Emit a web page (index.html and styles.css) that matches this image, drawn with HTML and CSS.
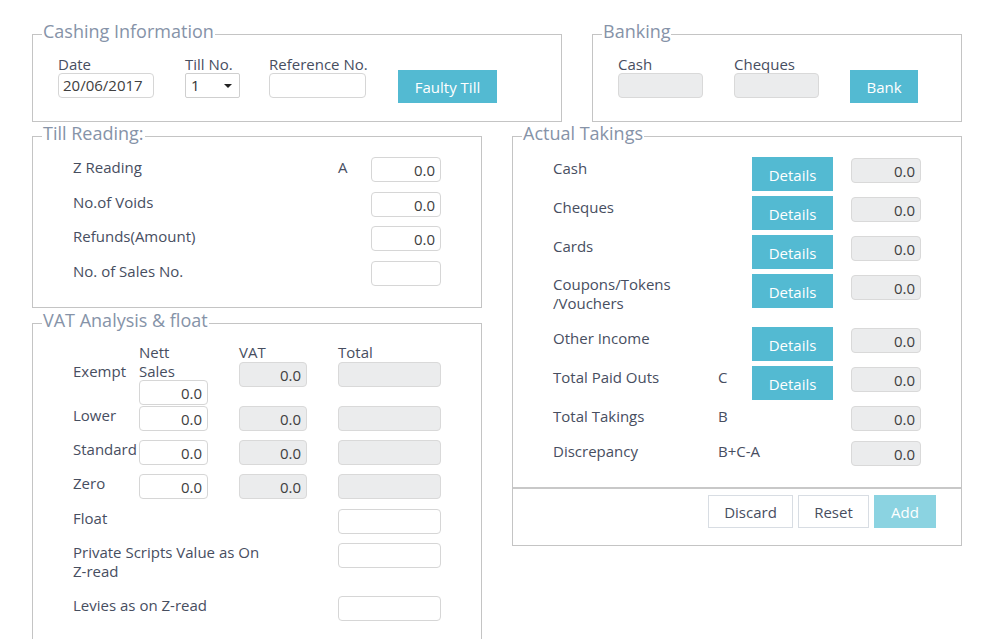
FILE: index.html
```html
<!DOCTYPE html>
<html>
<head>
<meta charset="utf-8">
<link rel="stylesheet" href="styles.css">
</head>
<body>
<div class="page">
  <div class="top-row">
    <fieldset class="box cashing">
      <legend>Cashing Information</legend>
      <div class="inline-fields">
        <div class="field f-date">
          <label class="flabel">Date</label>
          <div class="input">20/06/2017</div>
        </div>
        <div class="field f-till">
          <label class="flabel">Till No.</label>
          <div class="input select"><span>1</span><span class="caret"></span></div>
        </div>
        <div class="field f-ref">
          <label class="flabel">Reference No.</label>
          <div class="input"></div>
        </div>
        <button class="btn btn-primary btn-faulty">Faulty Till</button>
      </div>
    </fieldset>
    <fieldset class="box banking">
      <legend>Banking</legend>
      <div class="inline-fields">
        <div class="field f-cash">
          <label class="flabel">Cash</label>
          <div class="input disabled"></div>
        </div>
        <div class="field f-cheq">
          <label class="flabel">Cheques</label>
          <div class="input disabled"></div>
        </div>
        <button class="btn btn-primary btn-bank">Bank</button>
      </div>
    </fieldset>
  </div>

  <div class="bottom-row">
    <div class="col">
      <fieldset class="box till">
        <legend>Till Reading:</legend>
        <div class="till-grid">
          <div class="tr">
            <span class="lbl">Z Reading</span><span class="mark">A</span><div class="input num">0.0</div>
          </div>
          <div class="tr">
            <span class="lbl">No.of Voids</span><span class="mark"></span><div class="input num">0.0</div>
          </div>
          <div class="tr tr-tight">
            <span class="lbl">Refunds(Amount)</span><span class="mark"></span><div class="input num">0.0</div>
          </div>
          <div class="tr">
            <span class="lbl">No. of Sales No.</span><span class="mark"></span><div class="input num"></div>
          </div>
        </div>
      </fieldset>

      <fieldset class="box vat">
        <legend>VAT Analysis &amp; float</legend>
        <div class="vat-body">
          <div class="vr vr-exempt">
            <span class="lbl lbl-exempt">Exempt</span>
            <div class="vc"><span class="head head2">Nett<br>Sales</span><div class="input num w-nett">0.0</div></div>
            <div class="vc"><span class="head">VAT</span><div class="input num disabled w-vat">0.0</div></div>
            <div class="vc"><span class="head">Total</span><div class="input disabled w-total"></div></div>
          </div>
          <div class="vr vr-lower">
            <span class="lbl">Lower</span>
            <div class="vc"><div class="input num w-nett">0.0</div></div>
            <div class="vc"><div class="input num disabled w-vat">0.0</div></div>
            <div class="vc"><div class="input disabled w-total"></div></div>
          </div>
          <div class="vr">
            <span class="lbl">Standard</span>
            <div class="vc"><div class="input num w-nett">0.0</div></div>
            <div class="vc"><div class="input num disabled w-vat">0.0</div></div>
            <div class="vc"><div class="input disabled w-total"></div></div>
          </div>
          <div class="vr">
            <span class="lbl">Zero</span>
            <div class="vc"><div class="input num w-nett">0.0</div></div>
            <div class="vc"><div class="input num disabled w-vat">0.0</div></div>
            <div class="vc"><div class="input disabled w-total"></div></div>
          </div>
          <div class="vr vr-float">
            <span class="lbl span3">Float</span>
            <div class="vc"><div class="input w-total"></div></div>
          </div>
          <div class="vr">
            <span class="lbl span3 lbl-two">Private Scripts Value as On<br>Z-read</span>
            <div class="vc"><div class="input w-total"></div></div>
          </div>
          <div class="vr vr-levies">
            <span class="lbl span3">Levies as on Z-read</span>
            <div class="vc"><div class="input w-total"></div></div>
          </div>
        </div>
      </fieldset>
    </div>

    <div class="col">
      <fieldset class="box takings">
        <legend>Actual Takings</legend>
        <div class="tk-body">
          <div class="tk">
            <span class="tlbl">Cash</span><span class="tmark"></span>
            <button class="btn btn-primary btn-details">Details</button><span></span>
            <div class="input num disabled">0.0</div>
          </div>
          <div class="tk">
            <span class="tlbl">Cheques</span><span class="tmark"></span>
            <button class="btn btn-primary btn-details">Details</button><span></span>
            <div class="input num disabled">0.0</div>
          </div>
          <div class="tk">
            <span class="tlbl">Cards</span><span class="tmark"></span>
            <button class="btn btn-primary btn-details">Details</button><span></span>
            <div class="input num disabled">0.0</div>
          </div>
          <div class="tk">
            <span class="tlbl tlbl-two">Coupons/Tokens<br>/Vouchers</span><span class="tmark"></span>
            <button class="btn btn-primary btn-details">Details</button><span></span>
            <div class="input num disabled">0.0</div>
          </div>
          <div class="tk">
            <span class="tlbl">Other Income</span><span class="tmark"></span>
            <button class="btn btn-primary btn-details">Details</button><span></span>
            <div class="input num disabled">0.0</div>
          </div>
          <div class="tk">
            <span class="tlbl">Total Paid Outs</span><span class="tmark">C</span>
            <button class="btn btn-primary btn-details">Details</button><span></span>
            <div class="input num disabled">0.0</div>
          </div>
          <div class="tk">
            <span class="tlbl">Total Takings</span><span class="tmark">B</span>
            <span></span><span></span>
            <div class="input num disabled">0.0</div>
          </div>
          <div class="tk">
            <span class="tlbl">Discrepancy</span><span class="tmark">B+C-A</span>
            <span></span><span></span>
            <div class="input num disabled">0.0</div>
          </div>
        </div>
        <div class="tk-footer">
          <button class="btn btn-light btn-discard">Discard</button>
          <button class="btn btn-light btn-reset">Reset</button>
          <button class="btn btn-add">Add</button>
        </div>
      </fieldset>
    </div>
  </div>
</div>
</body>
</html>
```

FILE: styles.css
```css
* { box-sizing: border-box; }

html, body {
  margin: 0;
  padding: 0;
  background: #ffffff;
}

body {
  font-family: "Open Sans", "Noto Sans", sans-serif;
  font-size: 15px;
  color: #474e5f;
}

.page {
  padding: 20px 34px 0 32px;
  width: 996px;
}

.top-row {
  display: flex;
  gap: 30px;
}

.bottom-row {
  display: flex;
  gap: 30px;
  margin-top: 0;
  align-items: flex-start;
}

.col {
  width: 450px;
  display: flex;
  flex-direction: column;
}

.box {
  margin: 0;
  padding: 0;
  border: 1px solid #c4c4c4;
  min-width: 0;
}

.box legend {
  margin-left: 9px;
  padding: 0 1px 7px 1px;
  font-size: 18px;
  line-height: 22px;
  color: #8693a8;
}

.cashing { width: 530px; }
.banking { width: 370px; }

.inline-fields {
  display: flex;
  align-items: flex-start;
  padding: 6px 0 18px 25px;
}

.field {
  display: flex;
  flex-direction: column;
}

.flabel {
  line-height: 18px;
  height: 18px;
  color: #474e5f;
  white-space: nowrap;
}

.input {
  height: 25px;
  border: 1px solid #d6d6d6;
  border-radius: 4px;
  background: #ffffff;
  color: #404040;
  font-size: 15px;
  line-height: 23px;
  padding: 0 4px;
  white-space: nowrap;
  overflow: hidden;
}

.input.disabled {
  background: #ebeced;
  border-color: #d9d9d9;
}

.input.num {
  text-align: right;
  padding-right: 5px;
  line-height: 25px;
}

.f-date { width: 96px; margin-right: 31px; }
.f-till { width: 55px; margin-right: 29px; }
.f-ref { width: 97px; margin-right: 32px; }
.f-cash { width: 85px; margin-right: 31px; }
.f-cheq { width: 85px; margin-right: 31px; }

.select {
  display: flex;
  align-items: center;
  justify-content: space-between;
  padding: 0 7px 0 5px;
  border-color: #cfcfcf;
  border-radius: 2px;
  color: #333;
}

.caret {
  width: 0;
  height: 0;
  border-left: 4px solid transparent;
  border-right: 4px solid transparent;
  border-top: 4px solid #222;
}

.btn {
  font-family: inherit;
  font-size: 15px;
  border: 0;
  margin: 0;
  padding: 0;
  cursor: pointer;
}

.btn-primary {
  background: #53bad2;
  color: #ffffff;
  padding-top: 1px;
}

.btn-faulty {
  width: 99px;
  height: 33px;
  margin-top: 15px;
}

.btn-bank {
  width: 68px;
  height: 33px;
  margin-top: 15px;
}

/* Till reading */
.till-grid {
  padding: 6px 40px 21px 40px;
  display: flex;
  flex-direction: column;
  gap: 10px;
}

.tr {
  display: grid;
  grid-template-columns: 265px 33px 70px;
  align-items: start;
}

.tr-tight { margin-top: -1px; }

.lbl {
  line-height: 20px;
  color: #474e5f;
  white-space: nowrap;
}

.mark {
  line-height: 20px;
  color: #474e5f;
}

/* VAT */
.vat { margin-top: 1px; height: 345px; border-bottom: 0; }

.vat-body {
  padding: 5px 40px 20px 40px;
}

.vr {
  display: grid;
  grid-template-columns: 66px 100px 99px 103px;
  align-items: start;
  margin-top: 9px;
}

.vr-exempt { margin-top: 0; }
.vr-lower { margin-top: 1px; }
.vr-float { margin-top: 10px; }
.vr-levies { margin-top: 15px; }

.vr .lbl { line-height: 19px; }
.vr .lbl.lbl-two { line-height: 19px; margin-top: 0; }

.lbl-exempt { padding-top: 19px; }

.span3 { grid-column: 1 / span 3; }

.vc {
  display: flex;
  flex-direction: column;
}

.head {
  line-height: 19px;
  color: #474e5f;
}

.head2 + .input { margin-top: -1px; }

.w-nett { width: 69px; }
.w-vat { width: 68px; }
.w-total { width: 103px; }

/* Actual takings */
.takings { width: 450px; }

.tk-body {
  padding: 6px 40px 17px 40px;
  display: flex;
  flex-direction: column;
  gap: 5px;
}

.tk {
  display: grid;
  grid-template-columns: 165px 34px 81px 18px 70px;
  align-items: start;
}

.tlbl {
  line-height: 18px;
  margin: 2px 0 10px 0;
  white-space: nowrap;
}

.tlbl.tlbl-two {
  line-height: 19px;
  margin: 1px 0 9px 0;
}

.tmark {
  line-height: 18px;
  margin-top: 2px;
  white-space: nowrap;
}

.tk .input { margin-top: 1px; }

.btn-details {
  width: 81px;
  height: 34px;
  padding-top: 2px;
}

.tk-footer {
  border-top: 2px solid #c8c8c8;
  display: flex;
  justify-content: flex-end;
  gap: 5px;
  padding: 6px 25px 17px 0;
}

.btn-light {
  background: #ffffff;
  border: 1px solid #d8dde3;
  color: #474e5f;
  height: 33px;
}

.btn-discard { width: 85px; }
.btn-reset { width: 71px; }

.btn-add {
  width: 62px;
  height: 33px;
  background: #8bd3e1;
  color: #ffffff;
}
```
